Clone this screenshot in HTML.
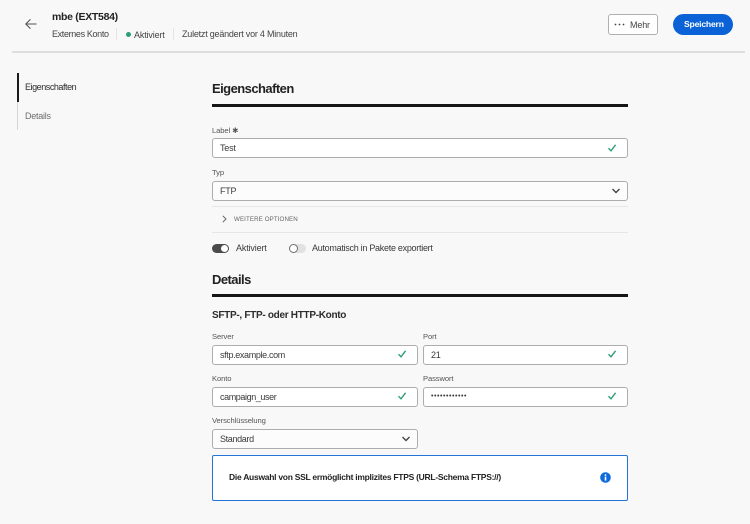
<!DOCTYPE html>
<html lang="de">
<head>
<meta charset="utf-8">
<title>mbe (EXT584)</title>
<style>
html,body{margin:0;padding:0;background:#f8f8f8}
body{width:750px;height:524px;position:relative;overflow:hidden;font-family:"Liberation Sans",sans-serif;color:#2c2c2c}
.a{position:absolute;white-space:nowrap}
.t{position:absolute;white-space:nowrap;line-height:14px;letter-spacing:-.15px}
.lab{font-size:7.6px;color:#555;letter-spacing:-.1px}
.f{position:absolute;box-sizing:border-box;background:#fff;border:1px solid #adadad;border-radius:3px;height:20px;font-size:9px;line-height:18px;padding-left:7px;color:#3a3a3a;letter-spacing:-.22px}
.s{background:#fcfcfc}
.h{font-size:13px;font-weight:bold;color:#222;letter-spacing:-.55px;line-height:18px}
.bar{position:absolute;left:212px;width:416px;height:3px;background:#151515}
.div{position:absolute;left:212px;width:416px;height:1px;background:#e6e6e6}
svg{position:absolute;overflow:visible}
.ck{fill:none;stroke:#2d9d78;stroke-width:1.4}
.cv{fill:none;stroke:#444;stroke-width:1.4}
</style>
</head>
<body>
<svg style="left:25px;top:18px" width="12" height="12" viewBox="0 0 12 12"><path d="M11.5 6H.8M5.4 1.4.8 6l4.6 4.6" fill="none" stroke="#555" stroke-width="1.1"/></svg>
<div class="t" style="left:52px;top:10px;font-size:10.5px;font-weight:bold;color:#222;letter-spacing:-.3px">mbe (EXT584)</div>
<div class="t" style="left:52px;top:27px;font-size:9px;color:#444;letter-spacing:-.35px">Externes Konto</div>
<div class="a" style="left:116px;top:28px;width:1px;height:12px;background:#e4e4e4"></div>
<div class="a" style="left:125.5px;top:32px;width:5px;height:5px;border-radius:50%;background:#2d9d78"></div>
<div class="t" style="left:134px;top:28px;font-size:9px;color:#444">Aktiviert</div>
<div class="a" style="left:173px;top:28px;width:1px;height:12px;background:#e4e4e4"></div>
<div class="t" style="left:182px;top:27px;font-size:9px;color:#444;letter-spacing:-.22px">Zuletzt geändert vor 4 Minuten</div>

<div class="a" style="left:608px;top:14px;width:50px;height:21px;box-sizing:border-box;background:#fff;border:1px solid #b0b0b0;border-radius:3px"></div>
<svg style="left:614px;top:23px" width="11" height="3" viewBox="0 0 11 3"><circle cx="1.5" cy="1.5" r=".9" fill="#444"/><circle cx="5.5" cy="1.5" r=".9" fill="#444"/><circle cx="9.5" cy="1.5" r=".9" fill="#444"/></svg>
<div class="t" style="left:630px;top:18px;font-size:9px;color:#444">Mehr</div>
<div class="a" style="left:673px;top:14px;width:60px;height:21px;background:#0a62d6;border-radius:11px"></div>
<div class="t" style="left:684px;top:17px;font-size:8.6px;font-weight:bold;color:#fff;letter-spacing:-.2px">Speichern</div>
<div class="a" style="left:12px;top:51px;width:733px;height:2px;background:#dedede"></div>

<div class="a" style="left:17px;top:73px;width:1px;height:57px;background:#d5d5d5"></div>
<div class="a" style="left:17px;top:73px;width:1.5px;height:29px;background:#1a1a1a"></div>
<div class="t" style="left:25px;top:80px;font-size:9px;color:#2c2c2c;letter-spacing:-.45px">Eigenschaften</div>
<div class="t" style="left:25px;top:109px;font-size:9px;color:#6e6e6e;letter-spacing:-.25px">Details</div>

<div class="t h" style="left:212px;top:80px">Eigenschaften</div>
<div class="bar" style="top:104px"></div>

<div class="t lab" style="left:212px;top:123.5px">Label ✱</div>
<div class="f" style="left:212px;top:138px;width:416px">Test</div>
<svg style="left:607px;top:143px" width="10" height="10" viewBox="0 0 10 10"><path class="ck" d="M1.5 5.2 4 7.8 8.6 1.8"/></svg>

<div class="t lab" style="left:212px;top:165.5px">Typ</div>
<div class="f s" style="left:212px;top:181px;width:416px">FTP</div>
<svg style="left:611px;top:187px" width="10" height="8" viewBox="0 0 10 8"><path class="cv" d="M1.5 2 5 5.5 8.5 2"/></svg>
<div class="div" style="top:206px"></div>
<svg style="left:222px;top:215px" width="5" height="8" viewBox="0 0 5 8"><path d="M.8.8 4 4 .8 7.2" fill="none" stroke="#666" stroke-width="1"/></svg>
<div class="t" style="left:234px;top:212.5px;font-size:6.2px;color:#666;letter-spacing:.1px">WEITERE OPTIONEN</div>
<div class="div" style="top:232px"></div>

<div class="a" style="left:212px;top:244px;width:17px;height:9px;border-radius:5px;background:#4a4a4a"></div>
<div class="a" style="left:221px;top:245px;width:7px;height:7px;border-radius:50%;background:#fff"></div>
<div class="t" style="left:236px;top:241px;font-size:9px;color:#3a3a3a">Aktiviert</div>
<div class="a" style="left:289px;top:244px;width:17px;height:9px;border-radius:5px;background:#e1e1e1"></div>
<div class="a" style="left:289px;top:244px;width:9px;height:9px;box-sizing:border-box;border-radius:50%;background:#fff;border:1.3px solid #707070"></div>
<div class="t" style="left:312px;top:241px;font-size:9px;color:#3a3a3a;letter-spacing:-.28px">Automatisch in Pakete exportiert</div>

<div class="t h" style="left:212px;top:271px">Details</div>
<div class="bar" style="top:294px"></div>
<div class="t" style="left:212px;top:308.5px;font-size:10px;font-weight:bold;color:#2c2c2c;letter-spacing:-.3px">SFTP-, FTP- oder HTTP-Konto</div>

<div class="t lab" style="left:212px;top:329.5px">Server</div>
<div class="f" style="left:212px;top:345px;width:206px;letter-spacing:-.35px">sftp.example.com</div>
<svg style="left:397px;top:349px" width="10" height="10" viewBox="0 0 10 10"><path class="ck" d="M1.5 5.2 4 7.8 8.6 1.8"/></svg>
<div class="t lab" style="left:423px;top:329.5px">Port</div>
<div class="f" style="left:423px;top:345px;width:205px">21</div>
<svg style="left:607px;top:349px" width="10" height="10" viewBox="0 0 10 10"><path class="ck" d="M1.5 5.2 4 7.8 8.6 1.8"/></svg>

<div class="t lab" style="left:212px;top:371.5px">Konto</div>
<div class="f" style="left:212px;top:387px;width:206px;letter-spacing:-.4px">campaign_user</div>
<svg style="left:397px;top:391px" width="10" height="10" viewBox="0 0 10 10"><path class="ck" d="M1.5 5.2 4 7.8 8.6 1.8"/></svg>
<div class="t lab" style="left:423px;top:371.5px">Passwort</div>
<div class="f" style="left:423px;top:387px;width:205px;font-size:7px;letter-spacing:.55px">••••••••••••</div>
<svg style="left:607px;top:391px" width="10" height="10" viewBox="0 0 10 10"><path class="ck" d="M1.5 5.2 4 7.8 8.6 1.8"/></svg>

<div class="t lab" style="left:212px;top:413.5px">Verschlüsselung</div>
<div class="f s" style="left:212px;top:429px;width:206px;letter-spacing:-.35px">Standard</div>
<svg style="left:401px;top:435px" width="10" height="8" viewBox="0 0 10 8"><path class="cv" d="M1.5 2 5 5.5 8.5 2"/></svg>

<div class="a" style="left:212px;top:455px;width:416px;height:46px;box-sizing:border-box;background:#fff;border:1.5px solid #2374d9;border-radius:2px"></div>
<div class="t" style="left:229px;top:470px;font-size:8.5px;font-weight:bold;color:#222;letter-spacing:-.27px">Die Auswahl von SSL ermöglicht implizites FTPS (URL-Schema FTPS://)</div>
<svg style="left:600px;top:472px" width="11" height="11" viewBox="0 0 11 11"><circle cx="5.5" cy="5.5" r="5.3" fill="#0f6bdc"/><rect x="4.7" y="4.6" width="1.6" height="4" fill="#fff"/><rect x="4.7" y="2.3" width="1.6" height="1.5" fill="#fff"/></svg>
</body>
</html>
